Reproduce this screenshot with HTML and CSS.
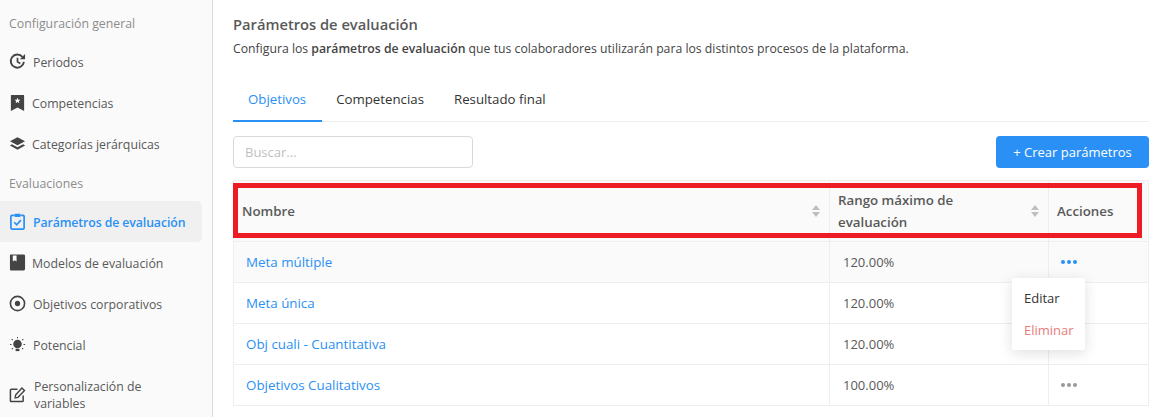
FILE: index.html
```html
<!DOCTYPE html>
<html lang="es">
<head>
<meta charset="utf-8">
<title>Parámetros de evaluación</title>
<link rel="stylesheet" href="styles.css">
</head>
<body>
<div class="app">
  <aside class="sidebar">
    <div class="group-label first">Configuración general</div>
    <a class="nav-item"><svg class="nav-icon" viewBox="0 0 18 18"><path d="M15.800 9.500A7 7 0 1 1 14.200 4" fill="none" stroke="#444" stroke-width="2"/><path d="M11.500 6.500h5.500V1z" fill="#444"/><path d="M9 5v4.400l3 1.800" fill="none" stroke="#444" stroke-width="1.800"/></svg><span class="nav-text">Periodos</span></a>
    <a class="nav-item tight"><svg class="nav-icon" viewBox="0 0 18 18"><path d="M2.500 1h13a.5.5 0 0 1 .5.5V18l-7-3.600L2 18V1.500a.5.5 0 0 1 .5-.5z" fill="#444"/><path d="M9 4l.9 2 2.100.2-1.600 1.400.5 2.100L9 8.600l-1.900 1.100.5-2.100L6 6.200 8.100 6z" fill="#fff"/></svg><span class="nav-text">Competencias</span></a>
    <a class="nav-item tight"><svg class="nav-icon" viewBox="0 0 18 18"><path d="M9 2.500l8 4.200-8 4.200-8-4.200z" fill="#444"/><path d="M3 9.700l-2 1.300 8 4.500 8-4.500-2-1.300-6 3.300z" fill="#444"/></svg><span class="nav-text">Categorías jerárquicas</span></a>
    <div class="group-label">Evaluaciones</div>
    <a class="nav-item active"><svg class="nav-icon" viewBox="0 0 18 18"><path d="M6 2.500H3a1 1 0 0 0-1 1V16a1 1 0 0 0 1 1h12a1 1 0 0 0 1-1V3.500a1 1 0 0 0-1-1h-3" fill="none" stroke="#2a90f5" stroke-width="1.800"/><path d="M6 .8h6v3.400H6z" fill="#2a90f5"/><path d="M5.500 9.800l2.600 2.700 4.500-5" fill="none" stroke="#2a90f5" stroke-width="1.800"/></svg><span class="nav-text">Parámetros de evaluación</span></a>
    <a class="nav-item tight"><svg class="nav-icon" viewBox="0 0 18 18"><path d="M2 .5h13.500A1.500 1.500 0 0 1 17 2v14a1.500 1.500 0 0 1-1.500 1.500H2a1 1 0 0 1-1-1v-15a1 1 0 0 1 1-1z" fill="#444"/><path d="M4 1.500h4v6.500l-2-1.400-2 1.400z" fill="#fff"/></svg><span class="nav-text">Modelos de evaluación</span></a>
    <a class="nav-item"><svg class="nav-icon" viewBox="0 0 18 18"><circle cx="9" cy="9" r="7.500" fill="none" stroke="#444" stroke-width="1.700"/><circle cx="9" cy="9" r="2.800" fill="#444"/></svg><span class="nav-text">Objetivos corporativos</span></a>
    <a class="nav-item"><svg class="nav-icon" viewBox="0 0 18 18"><circle cx="9" cy="8.500" r="4.500" fill="#444"/><path d="M7 13.500h4v2.500H7z" fill="#444"/><path d="M9 1v1.500M2.800 3.200l1.200 1.100M15.200 3.200L14 4.300M1 9h1.600M15.400 9H17M3 14l1.200-1.100M15 14l-1.200-1.100" stroke="#444" stroke-width="1.100"/></svg><span class="nav-text">Potencial</span></a>
    <a class="nav-item multi"><svg class="nav-icon" viewBox="0 0 18 18"><path d="M15 10v5.500a1 1 0 0 1-1 1H2.500a1 1 0 0 1-1-1V4.500a1 1 0 0 1 1-1H9" fill="none" stroke="#444" stroke-width="1.600"/><path d="M7 9.500L13.700 2.200l2.700 2.500L9.500 12l-3 .6z" fill="none" stroke="#444" stroke-width="1.500"/></svg><span class="nav-text">Personalización de variables</span></a>
  </aside>
  <main class="content">
    <h1 class="title">Parámetros de evaluación</h1>
    <p class="subtitle">Configura los <strong>parámetros de evaluación</strong> que tus colaboradores utilizarán para los distintos procesos de la plataforma.</p>
    <nav class="tabs">
      <a class="tab active">Objetivos</a>
      <a class="tab">Competencias</a>
      <a class="tab">Resultado final</a>
    </nav>
    <div class="toolbar">
      <input class="search" type="text" placeholder="Buscar...">
      <button class="primary" type="button">+ Crear parámetros</button>
    </div>
    <div class="table-wrap">
      <table class="data">
        <colgroup><col class="c-name"><col class="c-range"><col class="c-actions"></colgroup>
        <thead>
          <tr>
            <th><span class="th-inner">Nombre<span class="sorter"><i class="up"></i><i class="down"></i></span></span></th>
            <th><span class="th-inner"><span class="th-range">Rango máximo de evaluación</span><span class="sorter"><i class="up"></i><i class="down"></i></span></span></th>
            <th>Acciones</th>
          </tr>
        </thead>
        <tbody>
          <tr class="hover"><td><a class="link">Meta múltiple</a></td><td class="num">120.00%</td><td><span class="dots blue"><b></b><b></b><b></b></span></td></tr>
          <tr><td><a class="link">Meta única</a></td><td class="num">120.00%</td><td></td></tr>
          <tr><td><a class="link">Obj cuali - Cuantitativa</a></td><td class="num">120.00%</td><td></td></tr>
          <tr><td><a class="link">Objetivos Cualitativos</a></td><td class="num">100.00%</td><td><span class="dots"><b></b><b></b><b></b></span></td></tr>
        </tbody>
      </table>
      <div class="highlight"></div>
      <div class="menu">
        <div class="menu-item">Editar</div>
        <div class="menu-item danger">Eliminar</div>
      </div>
    </div>
  </main>
</div>
</body>
</html>
```

FILE: styles.css
```css
* { box-sizing: border-box; }
html, body { margin: 0; height: 100%; overflow: hidden; background: #fff; }
body { font-family: "Open Sans", "Noto Sans", sans-serif; font-size: 13px; color: #444; }
.app { display: flex; height: 417px; }
.sidebar { width: 213px; flex: none; background: #fafafa; border-right: 1px solid #ddd; padding-right: 10px; font-size: 12.300px; }
.group-label { color: #8c8c8c; height: 37px; line-height: 39px; padding-left: 9px; font-size: 12.300px; }
.group-label.first { height: 41px; line-height: 48px; }
.nav-item { display: flex; align-items: center; height: 41px; padding-left: 9px; color: #595959; border-radius: 0 5px 5px 0; }
.nav-item.active { background: #f0f0f0; color: #2a90f5; font-weight: 600; }
.nav-icon { width: 17px; height: 17px; flex: none; margin-right: 7px; }
.tight .nav-text { margin-left: -1px; }
.nav-text { line-height: 17px; padding-top: 2px; }
.active .nav-text { letter-spacing: -0.1px; }
.multi { height: 59px; }
.multi .nav-text { padding: 0 0 0 1px; max-width: 130px; }
.content { flex: 1; padding: 14px 4px 0 20px; min-width: 0; }
.title { margin: 0; font-size: 14.700px; font-weight: 600; line-height: 20px; color: #595959; }
.subtitle { margin: 6px 0 0; font-size: 12.240px; line-height: 18px; color: #444; }
.subtitle strong { font-weight: 600; }
.tabs { display: flex; margin-top: 26px; border-bottom: 1px solid #eee; height: 38px; }
.tab { padding: 0 15px; line-height: 30px; color: #333; height: 38px; font-size: 13.250px; }
.tab.active { color: #2a90f5; border-bottom: 2px solid #2a90f5; padding-right: 16px; }
.tab.active + .tab { padding-left: 14px; }
.toolbar { display: flex; justify-content: space-between; margin-top: 14px; }
.search { width: 240px; height: 32px; border: 1px solid #d9d9d9; border-radius: 4px; padding: 0 11px; font: inherit; background: #fff; }
.search::placeholder { color: #bfbfbf; }
.primary { width: 153px; height: 32px; border: 0; border-radius: 4px; background: #2a90f5; color: #fff; font: inherit; }
.table-wrap { position: relative; margin-top: 12px; }
.data { width: 100%; border-collapse: collapse; table-layout: fixed; }
.c-range { width: 219px; }
.c-actions { width: 100px; }
.data th, .data td { border: 1px solid #eee; padding: 0 8px; text-align: left; }
.data th { background: #fafafa; height: 61px; font-weight: 600; color: #595959; line-height: 22px; font-size: 13.300px; }
.data td { height: 41px; padding-left: 12px; color: #595959; font-size: 13.350px; }
.data td.num { padding-left: 13px; font-size: 13px; }
.data tr.hover td { background: #fafafa; }
.th-inner { display: flex; align-items: center; justify-content: space-between; }
.th-range { max-width: 150px; }
.sorter { display: flex; flex-direction: column; gap: 2px; flex: none; margin-right: 1px; }
.sorter i { display: block; width: 0; height: 0; border-left: 4.500px solid transparent; border-right: 4.500px solid transparent; }
.sorter .up { border-bottom: 5px solid #bfbfbf; }
.sorter .down { border-top: 5px solid #bfbfbf; }
.link { color: #2a90f5; }
.dots { display: flex; gap: 2px; }
.dots b { width: 4px; height: 4px; border-radius: 50%; background: #999; }
.dots.blue b { background: #2a90f5; }
.highlight { position: absolute; left: 0; top: 3px; width: 909px; height: 55px; border: 5px solid #ed1c24; pointer-events: none; }
.menu { position: absolute; left: 779px; top: 98px; width: 73px; height: 72px; background: #fff; border-radius: 2px; box-shadow: 0 3px 14px rgba(0,0,0,.13); padding: 4px 0 0 12px; }
.menu-item { height: 32px; line-height: 32px; color: #333; }
.menu-item.danger { color: #e87c7c; }
```
